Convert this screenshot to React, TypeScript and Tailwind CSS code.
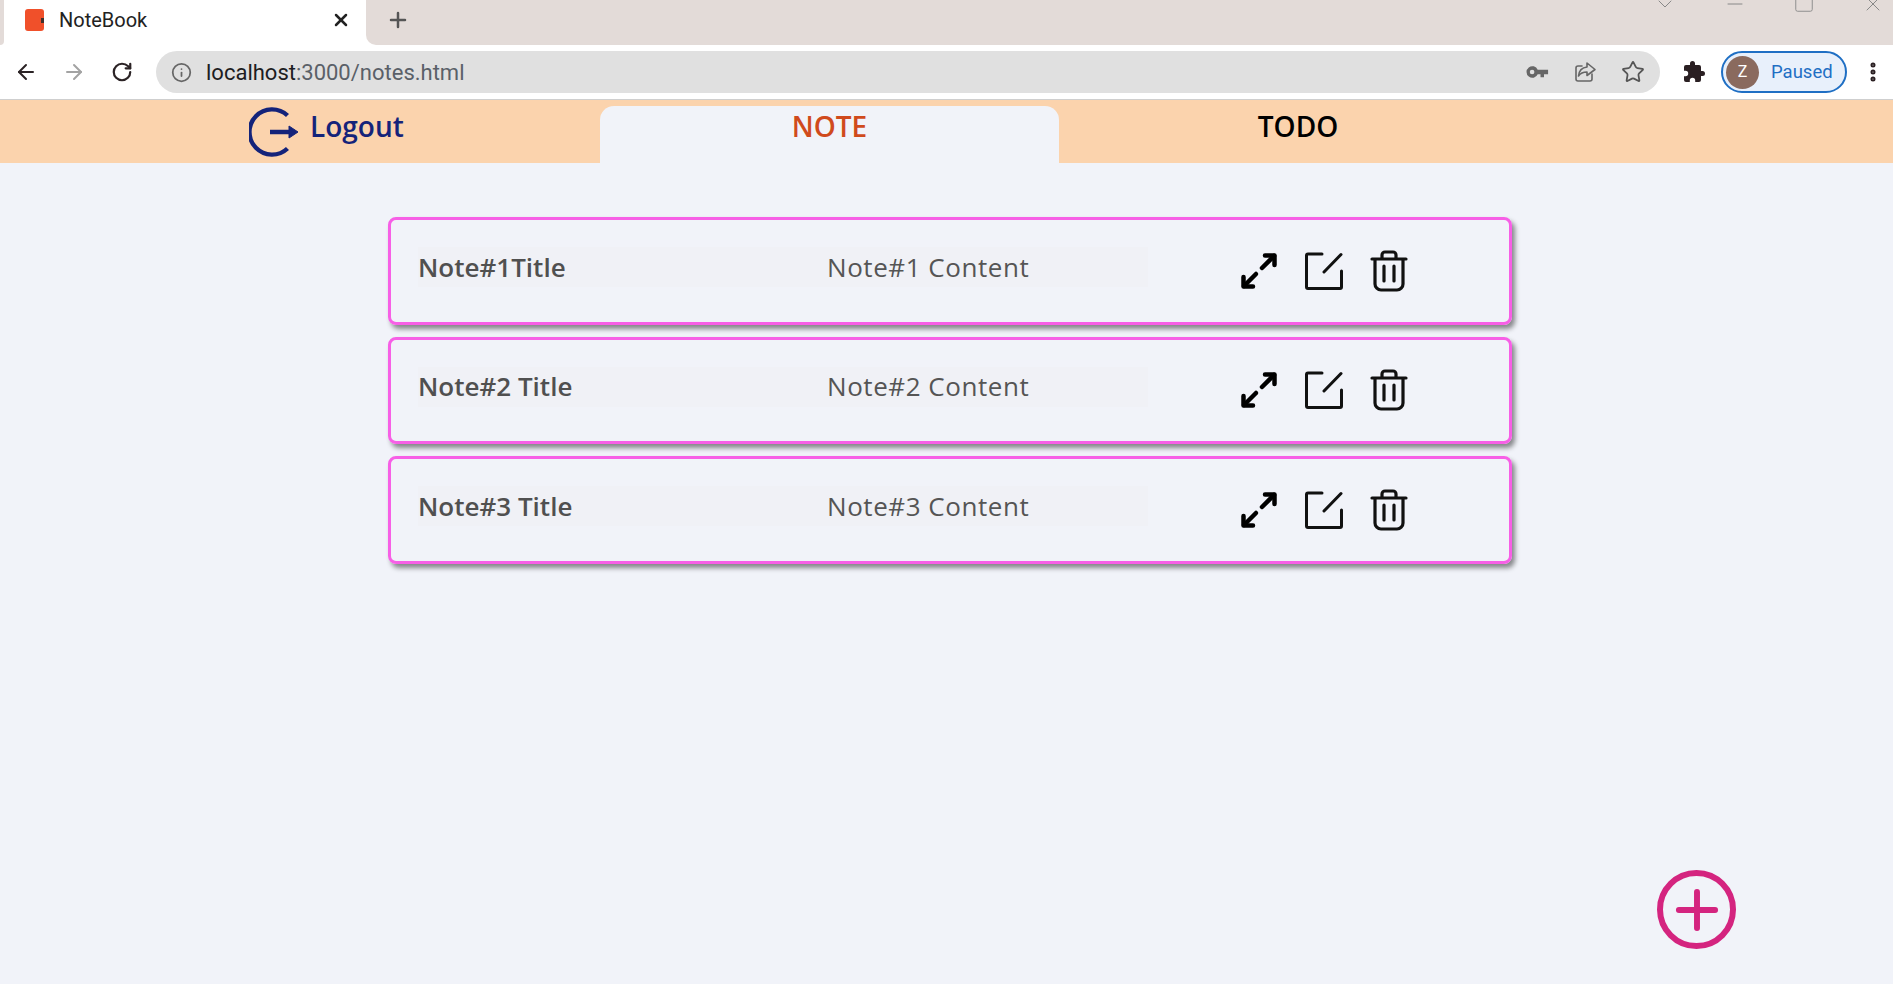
import React from 'react';
import { ArrowLeft, ArrowRight, RotateCw, Info, Star, Plus, X, Minus, Square, ChevronDown, MoreVertical } from 'lucide-react';

const notes = [
  { id: 1, title: 'Note#1Title', content: 'Note#1 Content' },
  { id: 2, title: 'Note#2 Title', content: 'Note#2 Content' },
  { id: 3, title: 'Note#3 Title', content: 'Note#3 Content' },
];

function ExpandIcon() {
  return (
    <svg width="38" height="38" viewBox="0 0 38 38" fill="none" stroke="#000" strokeWidth="4.500" strokeLinecap="round" strokeLinejoin="round">
      <path d="M22 16 L34 4" />
      <path d="M25 3.500 H34.500 V13" />
      <path d="M16 22 L4 34" />
      <path d="M3.500 25 V34.500 H13" />
    </svg>
  );
}

function EditIcon() {
  return (
    <svg width="38" height="38" viewBox="0 0 38 38" fill="none" stroke="#111" strokeWidth="3" strokeLinecap="round" strokeLinejoin="round">
      <path d="M17 2 H3 a1.500 1.500 0 0 0 -1.500 1.500 V35 a1.500 1.500 0 0 0 1.500 1.500 H35 a1.500 1.500 0 0 0 1.500 -1.500 V19" />
      <path d="M19 20 L36 2.500" />
    </svg>
  );
}

function TrashIcon() {
  return (
    <svg width="38" height="42" viewBox="0 0 38 42" fill="none" stroke="#111" strokeWidth="3.200" strokeLinecap="round" strokeLinejoin="round">
      <path d="M2 9 H36" />
      <path d="M12 8 V5 a3 3 0 0 1 3 -3 H23 a3 3 0 0 1 3 3 V8" />
      <path d="M5 10 V34 a6 6 0 0 0 6 6 H27 a6 6 0 0 0 6 -6 V10" />
      <path d="M14 16 V31" />
      <path d="M24 16 V31" />
    </svg>
  );
}

function LogoutIcon() {
  return (
    <svg width="50" height="50" viewBox="0 0 50 50" fill="none" stroke="#14237a" strokeWidth="4.400">
      <path d="M38.500 8.500 A22.600 22.600 0 1 0 38.500 41.500" />
      <path d="M21 25 H42" strokeWidth="4.500" />
      <path d="M40 19 L49 25 L40 31 Z" fill="#14237a" strokeWidth="1" />
    </svg>
  );
}

function KeyIcon() {
  return (
    <svg width="28" height="28" viewBox="0 0 24 24" fill="#666" className="-mx-[2px]">
      <path d="M12.600 10a5 5 0 1 0 0 4H15v2.500h3V14h3.500v-4z M7.800 14a2 2 0 1 1 0-4 2 2 0 0 1 0 4z" />
    </svg>
  );
}

function ShareIcon() {
  return (
    <svg width="24" height="24" viewBox="0 0 24 24" fill="none" stroke="#666" strokeWidth="1.600" strokeLinejoin="round" strokeLinecap="round">
      <path d="M19 14v5a2 2 0 0 1-2 2H5a2 2 0 0 1-2-2V8a2 2 0 0 1 2-2h4" />
      <path d="M14 3l8 6.500-8 6V12c-4 0-6.500 1-8.500 4 .5-5 3.500-8.500 8.500-9z" />
    </svg>
  );
}

function PuzzleIcon() {
  return (
    <svg width="24" height="24" viewBox="0 0 24 24" fill="#2a1f22">
      <path d="M20.500 11H19V7a2 2 0 0 0-2-2h-4V3.500a2.500 2.500 0 0 0-5 0V5H4a2 2 0 0 0-2 2v3.800h1.500a2.700 2.700 0 0 1 0 5.400H2V20a2 2 0 0 0 2 2h3.800v-1.500a2.700 2.700 0 0 1 5.400 0V22H17a2 2 0 0 0 2-2v-4h1.500a2.500 2.500 0 0 0 0-5z" />
    </svg>
  );
}

function NoteRow({ title, content }: { title: string; content: string }) {
  return (
    <div className="flex items-center h-[107.500px] rounded-[8px] border-[3px] border-[#f75fe6] shadow-[3px_4px_5px_rgba(0,0,0,0.45)] pl-[27px]">
      <div className="w-[322px] h-[40px] -mt-[7px] flex items-center bg-[#f0f1f6] text-[26px] font-semibold text-[#505050]">
        {title}
      </div>
      <div className="w-[408px] h-[40px] -mt-[7px] flex items-center pl-[87px] bg-[#f0f1f6] text-[26px] tracking-[0.55px] text-[#555]">
        {content}
      </div>
      <div className="flex items-center gap-[27px] ml-[92px]">
        <ExpandIcon />
        <EditIcon />
        <TrashIcon />
      </div>
    </div>
  );
}

export default function App() {
  return (
    <div className="relative w-full h-[984px] overflow-hidden flex flex-col bg-[#f1f3f9] font-['Open_Sans',sans-serif]">
      {/* browser tab strip */}
      <div className="h-[45px] bg-white flex shrink-0">
        <div className="w-[4px] h-full bg-[#e3dbd8] rounded-br-[8px]" />
        <div className="w-[362px] h-full flex items-center pb-[5px] pl-[21px] pr-[15px] text-[20px] text-[#222] font-['Roboto',sans-serif]">
          <div className="w-[19px] h-[22px] rounded-[3px] bg-[#f0502a] flex items-center justify-end">
            <div className="w-[3px] h-[5px] bg-[#40302c]" />
          </div>
          <span className="ml-[15px]">NoteBook</span>
          <X size={20} strokeWidth={3} className="ml-auto text-[#222]" />
        </div>
        <div className="flex-1 h-full bg-[#e3dbd8] rounded-bl-[10px] flex items-center pb-[6px]">
          <Plus size={24} strokeWidth={2.5} className="ml-[20px] text-[#555]" />
          <div className="ml-auto flex items-start self-start gap-[46px] pr-[8px] text-[#888] -mt-[8px]">
            <ChevronDown size={24} strokeWidth={1} />
            <Minus size={24} strokeWidth={1} />
            <Square size={22} strokeWidth={1} />
            <X size={24} strokeWidth={1} />
          </div>
        </div>
      </div>

      {/* browser toolbar */}
      <div className="h-[55px] bg-white border-b border-b-[#cfcfcf] flex items-center shrink-0 pl-[14px]">
        <ArrowLeft size={24} className="text-[#2b2325]" />
        <ArrowRight size={24} className="ml-[24px] text-[#a3a3a3]" />
        <RotateCw size={22} strokeWidth={2.4} className="ml-[25px] text-[#2b2325]" />
        <div className="ml-[23px] w-[1504px] h-[42px] rounded-full bg-[#e0e0e0] flex items-center pl-[15px] pr-[15px]">
          <Info size={21} className="text-[#666]" />
          <span className="ml-[14px] text-[22px] text-[#5a6068] font-['Roboto',sans-serif]">
            <span className="text-[#1d1d22]">localhost</span>:3000/notes.html
          </span>
          <div className="ml-auto flex items-center gap-[24px]">
            <KeyIcon />
            <ShareIcon />
            <Star size={24} strokeWidth={1.8} className="text-[#555]" />
          </div>
        </div>
        <div className="ml-[22px]">
          <PuzzleIcon />
        </div>
        <div className="ml-[15px] w-[126px] h-[42px] rounded-full border-2 border-[#1f6fc4] bg-[#e8f0fb] flex items-center pl-[3px] text-[18.500px] text-[#1f6fc4] font-['Roboto',sans-serif]">
          <div className="w-[33px] h-[33px] rounded-full bg-[#8a6a5e] flex items-center justify-center text-white text-[16px]">Z</div>
          <span className="ml-[12px] mt-[2px]">Paused</span>
        </div>
        <MoreVertical size={24} strokeWidth={3} className="ml-[14px] text-[#2a1f22]" />
      </div>

      {/* app header */}
      <div className="h-[63px] bg-[#fbd3ad] flex items-end shrink-0">
        <div className="w-[600px] h-full flex items-center pl-[249px] gap-[11px] text-[28px] font-semibold text-[#14237a]">
          <LogoutIcon />
          <span className="-mt-[11px]">Logout</span>
        </div>
        <div className="w-[459px] h-[57px] bg-[#f1f3f9] rounded-t-[14px] flex justify-center pt-[2px] text-[28px] font-semibold leading-[36px] text-[#d04a1c]">
          NOTE
        </div>
        <div className="w-[478px] h-full flex justify-center pt-[8px] text-[28px] font-semibold leading-[36px] text-black">
          TODO
        </div>
      </div>

      {/* notes */}
      <div className="flex-1 pt-[54px] pl-[388px]">
        <div className="w-[1124px] flex flex-col gap-[12px]">
          {notes.map((note) => (
            <NoteRow key={note.id} title={note.title} content={note.content} />
          ))}
        </div>
      </div>

      {/* add button */}
      <button className="absolute left-[1657px] top-[870px] w-[79px] h-[79px] rounded-full border-[6px] border-[#d4247f] flex items-center justify-center">
        <Plus size={62} strokeWidth={2.3} className="text-[#d4247f] shrink-0" />
      </button>
    </div>
  );
}
